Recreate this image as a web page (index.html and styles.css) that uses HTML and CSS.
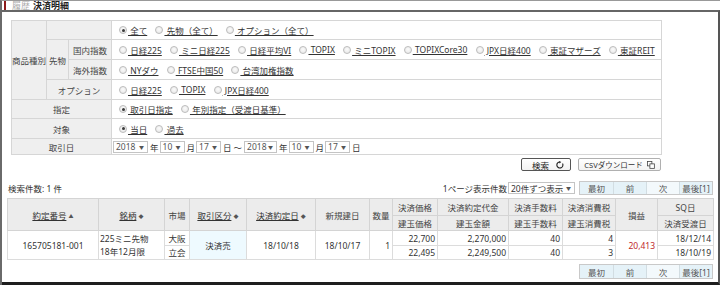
FILE: index.html
```html
<!DOCTYPE html>
<html lang="ja">
<head>
<meta charset="utf-8">
<link rel="stylesheet" href="styles.css">
</head>
<body>
<div class="page">
  <div class="topbar">
    <span class="redbar"></span>
    <span class="crumb">履歴</span>
    <span class="title">決済明細</span>
  </div>
  <div class="frame">
    <div class="search">
      <table class="form">
        <colgroup><col class="c1"><col class="c2"><col class="c3"><col></colgroup>
        <tr class="r19">
          <th rowspan="4">商品種別</th>
          <th colspan="2"></th>
          <td>
            <span class="opt"><span class="radio on"></span><a>&nbsp;全て</a></span>
            <span class="opt"><span class="radio"></span><a>&nbsp;先物（全て）</a></span>
            <span class="opt"><span class="radio"></span><a>&nbsp;オプション（全て）</a></span>
          </td>
        </tr>
        <tr class="r20">
          <th rowspan="2">先物</th>
          <th>国内指数</th>
          <td>
            <span class="opt"><span class="radio"></span><a>&nbsp;日経225</a></span>
            <span class="opt"><span class="radio"></span><a>&nbsp;ミニ日経225</a></span>
            <span class="opt"><span class="radio"></span><a>&nbsp;日経平均VI</a></span>
            <span class="opt"><span class="radio"></span><a>&nbsp;TOPIX</a></span>
            <span class="opt"><span class="radio"></span><a>&nbsp;ミニTOPIX</a></span>
            <span class="opt"><span class="radio"></span><a>&nbsp;TOPIXCore30</a></span>
            <span class="opt"><span class="radio"></span><a>&nbsp;JPX日経400</a></span>
            <span class="opt"><span class="radio"></span><a>&nbsp;東証マザーズ</a></span>
            <span class="opt"><span class="radio"></span><a>&nbsp;東証REIT</a></span>
          </td>
        </tr>
        <tr class="r20">
          <th>海外指数</th>
          <td>
            <span class="opt"><span class="radio"></span><a>&nbsp;NYダウ</a></span>
            <span class="opt"><span class="radio"></span><a>&nbsp;FTSE中国50</a></span>
            <span class="opt"><span class="radio"></span><a>&nbsp;台湾加権指数</a></span>
          </td>
        </tr>
        <tr class="r20">
          <th colspan="2">オプション</th>
          <td>
            <span class="opt"><span class="radio"></span><a>&nbsp;日経225</a></span>
            <span class="opt"><span class="radio"></span><a>&nbsp;TOPIX</a></span>
            <span class="opt"><span class="radio"></span><a>&nbsp;JPX日経400</a></span>
          </td>
        </tr>
        <tr class="r19">
          <th colspan="3">指定</th>
          <td>
            <span class="opt"><span class="radio on"></span><a>&nbsp;取引日指定</a></span>
            <span class="opt"><span class="radio"></span><a>&nbsp;年別指定（受渡日基準）</a></span>
          </td>
        </tr>
        <tr class="r20">
          <th colspan="3">対象</th>
          <td>
            <span class="opt"><span class="radio on"></span><a>&nbsp;当日</a></span>
            <span class="opt"><span class="radio"></span><a>&nbsp;過去</a></span>
          </td>
        </tr>
        <tr class="r16">
          <th colspan="3">取引日</th>
          <td class="dates">
            <div class="daterow">
              <span class="sel w35">2018<i>▼</i></span><span class="u">年</span>
              <span class="sel w25">10<i>▼</i></span><span class="u">月</span>
              <span class="sel w25">17<i>▼</i></span><span class="u">日</span><span class="tilde">～</span>
              <span class="sel w34">2018<i>▼</i></span><span class="u">年</span>
              <span class="sel w25">10<i>▼</i></span><span class="u">月</span>
              <span class="sel w25">17<i>▼</i></span><span class="u">日</span>
            </div>
          </td>
        </tr>
      </table>
      <div class="actions">
        <button class="btn main">検索
          <svg width="8" height="8" viewBox="0 0 10 10"><path d="M8.2 3.2A3.8 3.8 0 1 1 5 1.2" fill="none" stroke="#222" stroke-width="1.4"/><path d="M4 0 L6.6 1.3 L4.3 3.1 Z" fill="#222"/></svg>
        </button>
        <button class="btn csv">CSVダウンロード
          <svg width="8" height="8" viewBox="0 0 10 10"><rect x="0.6" y="0.6" width="5.5" height="5.5" fill="#fff" stroke="#444" stroke-width="1"/><rect x="3.6" y="3.6" width="5.6" height="5.6" fill="#fff" stroke="#444" stroke-width="1"/></svg>
        </button>
      </div>
    </div>

    <div class="resbar">
      <span class="count">検索件数: 1 件</span>
      <div class="right">
        <span>1ページ表示件数</span>
        <span class="sel w66">20件ずつ表示<i>▼</i></span>
        <div class="pager">
          <span>最初</span><span>前</span><span class="lite">次</span><span>最後[1]</span>
        </div>
      </div>
    </div>

    <table class="res">
      <colgroup>
        <col class="w91"><col class="w66c"><col class="w25c"><col class="w57">
        <col class="w69"><col class="w54"><col class="w23"><col class="w45">
        <col class="w71"><col class="w54"><col class="w53"><col class="w42"><col class="w56">
      </colgroup>
      <tr class="h1">
        <th rowspan="2"><a>約定番号</a> <i class="up">▲</i></th>
        <th rowspan="2"><a>銘柄</a> <i class="dot">◆</i></th>
        <th rowspan="2">市場</th>
        <th rowspan="2"><a>取引区分</a> <i class="dot">◆</i></th>
        <th rowspan="2"><a>決済約定日</a> <i class="dot">◆</i></th>
        <th rowspan="2">新規建日</th>
        <th rowspan="2">数量</th>
        <th>決済価格</th>
        <th>決済約定代金</th>
        <th>決済手数料</th>
        <th>決済消費税</th>
        <th rowspan="2">損益</th>
        <th>SQ日</th>
      </tr>
      <tr class="h2">
        <th>建玉価格</th>
        <th>建玉金額</th>
        <th>建玉手数料</th>
        <th>建玉消費税</th>
        <th>決済受渡日</th>
      </tr>
      <tr class="d1">
        <td rowspan="2" class="c">165705181-001</td>
        <td rowspan="2" class="l">225ミニ先物<br>18年12月限</td>
        <td class="c">大阪</td>
        <td rowspan="2" class="c kind">決済売</td>
        <td rowspan="2" class="c">18/10/18</td>
        <td rowspan="2" class="c">18/10/17</td>
        <td rowspan="2" class="r">1</td>
        <td class="r">22,700</td>
        <td class="r">2,270,000</td>
        <td class="r">40</td>
        <td class="r">4</td>
        <td rowspan="2" class="r pl">20,413</td>
        <td class="r">18/12/14</td>
      </tr>
      <tr class="d2">
        <td class="c">立会</td>
        <td class="r">22,495</td>
        <td class="r">2,249,500</td>
        <td class="r">40</td>
        <td class="r">3</td>
        <td class="r">18/10/19</td>
      </tr>
    </table>

    <div class="bottombar">
      <div class="pager">
        <span>最初</span><span>前</span><span class="lite">次</span><span>最後[1]</span>
      </div>
    </div>
  </div>
</div>
</body>
</html>
```

FILE: styles.css
```css
* { box-sizing: border-box; }
html, body { margin: 0; padding: 0; }
body {
  width: 720px;
  height: 285px;
  overflow: hidden;
  background: #fff;
  font-family: "Noto Sans", "Noto Sans CJK JP", sans-serif;
  font-size: 8.5px;
  color: #333;
}
.page {
  height: 285px;
  display: flex;
  flex-direction: column;
  border-left: 2px solid #6a6a6a;
  border-top: 1px solid #999;
}
.topbar {
  height: 9px;
  display: flex;
  align-items: center;
  padding-left: 2px;
  font-size: 9px;
}
.redbar {
  width: 2px;
  height: 9px;
  background: #8e1b1b;
  margin-right: 6px;
}
.crumb { color: #aaa; margin-right: 3px; }
.title { font-weight: bold; color: #222; }

.frame {
  flex: 1;
  border-top: 2px solid #666;
  border-right: 2px solid #555;
  border-bottom: 3px solid #1e1e1e;
  padding: 8px 2px 0 5px;
  display: flex;
  flex-direction: column;
}

.search { width: 651px; margin-left: 4px; }
table { border-collapse: collapse; }
.form {
  width: 651px;
  table-layout: fixed;
  border: 1px solid #c6c6c6;
}
.form col.c1 { width: 35px; }
.form col.c2 { width: 22px; }
.form col.c3 { width: 43px; }
.form th {
  background: #efefef;
  font-weight: normal;
  color: #444;
  border: 1px solid #d6d6d6;
  text-align: center;
  padding: 0;
}
.form td {
  border: 1px solid #d6d6d6;
  padding: 0 0 0 7px;
  white-space: nowrap;
}
.form tr.r19 { height: 19px; }
.form tr.r20 { height: 20px; }
.form tr.r16 { height: 16px; }

.opt {
  display: inline-flex;
  align-items: center;
  margin-right: 6px;
  vertical-align: middle;
}
.opt a { text-decoration: underline; color: #333; }
.radio {
  width: 8px;
  height: 8px;
  border-radius: 50%;
  border: 1px solid #bdbdbd;
  background: radial-gradient(circle at 50% 40%, #fbfbfb, #e4e4e4);
  margin-right: 1px;
  position: relative;
}
.radio.on::after {
  content: "";
  position: absolute;
  left: 1.5px;
  top: 1.5px;
  width: 3px;
  height: 3px;
  border-radius: 50%;
  background: #3a3a3a;
}

.form td.dates { padding-left: 1px; }
.daterow { display: flex; align-items: center; }
.daterow .u { margin: 0 1px 0 2px; color: #333; }
.daterow .tilde { margin: 0 2px 0 1px; color: #333; }
.sel {
  display: inline-flex;
  align-items: center;
  justify-content: space-between;
  height: 12px;
  border: 1px solid #c4c4c4;
  background: #fff;
  padding: 0 3px 0 2px;
  color: #555;
  vertical-align: middle;
}
.sel i { font-style: normal; font-size: 5px; color: #555; }
.w35 { width: 35px; }
.w34 { width: 33px; }
.w25 { width: 25px; }
.w66 { width: 67px; color: #333; }

.actions {
  display: flex;
  justify-content: flex-end;
  gap: 7px;
  margin-top: 3px;
  padding-right: 1px;
}
.btn {
  height: 13px;
  display: inline-flex;
  align-items: center;
  justify-content: center;
  gap: 7px;
  font-family: inherit;
  background: linear-gradient(#ffffff, #f3f3f3);
  border-radius: 2px;
  padding: 0;
  color: #222;
}
.btn.main { width: 50px; border: 1px solid #555; font-size: 8.5px; padding-left: 4px; }
.btn.csv { width: 83px; border: 1px solid #b0b0b0; font-size: 7.5px; gap: 4px; color: #333; }

.resbar {
  display: flex;
  justify-content: space-between;
  align-items: center;
  margin-top: 10px;
  height: 13px;
  padding-left: 1px;
  padding-right: 3px;
}
.resbar .right { display: flex; align-items: center; }
.resbar .right > span:first-child { margin-right: 1px; }
.pager {
  display: flex;
  margin-left: 4px;
  border: 1px solid #c9c9c9;
}
.pager span {
  width: 33px;
  height: 12px;
  display: flex;
  align-items: center;
  justify-content: center;
  background: #e5f2f8;
  border-left: 1px solid #d2dde2;
  color: #555;
}
.pager span:first-child { border-left: none; }
.pager span.lite { background: #f3f9fc; }

.res {
  width: 706px;
  table-layout: fixed;
  margin-top: 4px;
  border: 1px solid #cfcfcf;
}
.res col.w91 { width: 91px; }
.res col.w66c { width: 66px; }
.res col.w25c { width: 25px; }
.res col.w57 { width: 57px; }
.res col.w69 { width: 69px; }
.res col.w54 { width: 54px; }
.res col.w23 { width: 23px; }
.res col.w45 { width: 45px; }
.res col.w71 { width: 71px; }
.res col.w53 { width: 53px; }
.res col.w42 { width: 42px; }
.res col.w56 { width: 56px; }
.res th {
  background: #ececec;
  font-weight: normal;
  color: #444;
  border: 1px solid #d4d4d4;
  padding: 0;
  text-align: center;
  white-space: nowrap;
}
.res th a { text-decoration: underline; color: #333; }
.res th i { font-style: normal; font-size: 5px; color: #555; vertical-align: 1px; }
.res tr.h1 { height: 17px; }
.res tr.h2 { height: 15px; }
.res tr.d1 { height: 15px; }
.res tr.d2 { height: 14px; }
.res td {
  border: 1px solid #dcdcdc;
  padding: 0 2px;
  white-space: nowrap;
  line-height: 13px;
}
.res td.c { text-align: center; }
.res td.r { text-align: right; }
.res td.l { text-align: left; padding-left: 1px; }
.res td.kind { background: #eefaff; }
.res td.pl { color: #c0282b; }

.bottombar {
  display: flex;
  justify-content: flex-end;
  margin-top: 4px;
  padding-right: 3px;
}
.bottombar .pager span { height: 13px; }
```
